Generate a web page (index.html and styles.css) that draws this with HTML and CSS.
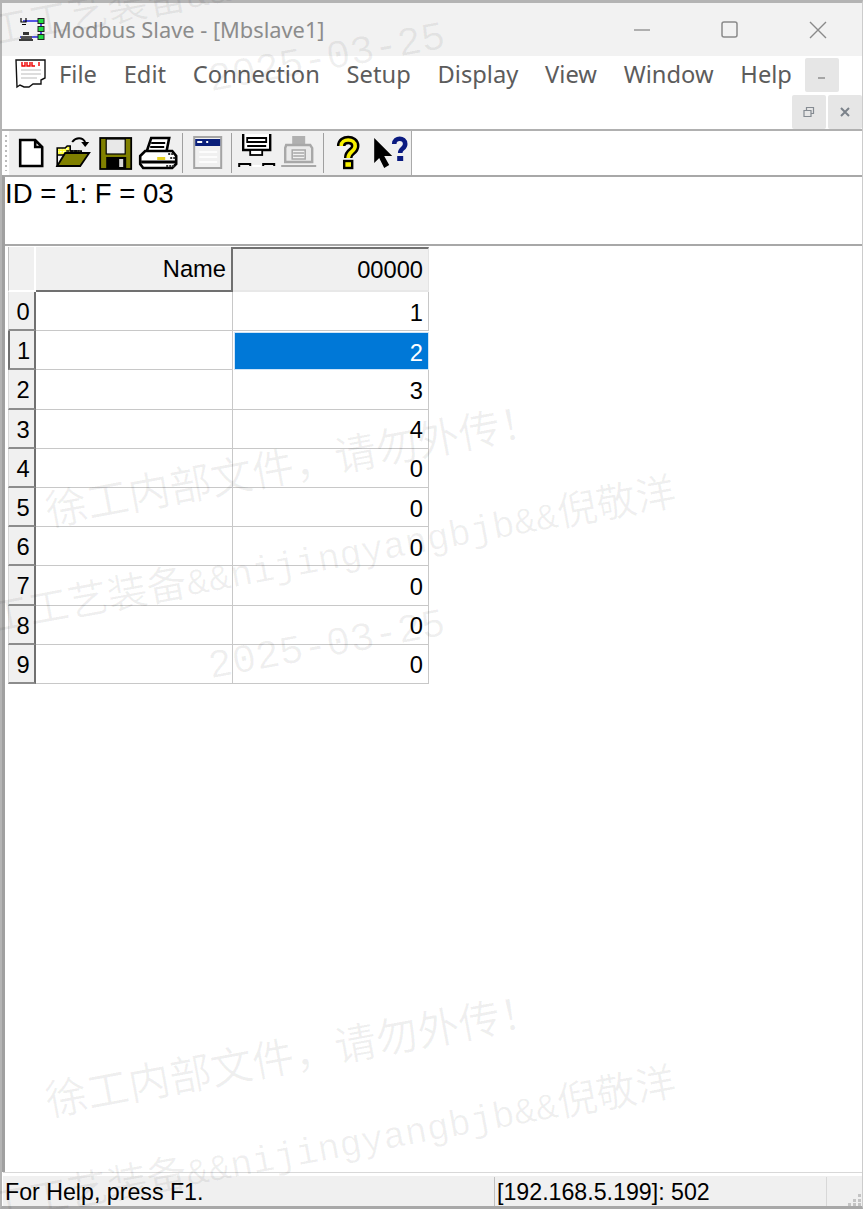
FILE: index.html
```html
<!DOCTYPE html>
<html lang="en">
<head>
  <meta charset="UTF-8">
  <meta name="viewport" content="width=device-width, initial-scale=1.0">
  <title>Modbus Slave - [Mbslave1]</title>
  <link rel="stylesheet" href="styles.css">
</head>
<body>

<div id="app">
  <!-- title bar -->
  <div class="titlebar">
    <svg class="app-icon" width="28" height="26" viewBox="0 0 28 26">
      <path d="M6 4H24M24 4V20M3 20H24" fill="none" stroke="#2222dd" stroke-width="1.5"/>
      <path d="M4 1V5H9V1" fill="none" stroke="#000" stroke-width="1.2"/>
      <rect x="21" y="1.5" width="6" height="5" fill="#22dd44" stroke="#222" stroke-width="1"/>
      <rect x="21" y="9.5" width="6" height="5" fill="#22dd44" stroke="#222" stroke-width="1"/>
      <rect x="21" y="17.5" width="6" height="5" fill="#22dd44" stroke="#222" stroke-width="1"/>
      <rect x="5" y="7" width="4" height="1" fill="#000"/>
      <path d="M6 15H12V18H6Z" fill="#333"/>
      <path d="M4 19H15V22H4Z" fill="#555"/>
      <path d="M2 23H16" stroke="#000" stroke-width="1.5"/>
    </svg>
    <span class="title-text">Modbus Slave - [Mbslave1]</span>
    <div class="win-controls">
      <svg width="88" height="20" viewBox="0 0 18 20"><path d="M1 10H17" stroke="#999" stroke-width="1.5"/></svg>
      <svg width="88" height="20" viewBox="0 0 18 20"><rect x="1" y="2" width="15" height="15" rx="2" fill="none" stroke="#8a8a8a" stroke-width="1.5"/></svg>
      <svg width="88" height="20" viewBox="0 0 18 20"><path d="M1 2L17 18M17 2L1 18" stroke="#8a8a8a" stroke-width="1.4"/></svg>
    </div>
  </div>

  <!-- menu -->
  <div class="menubar">
    <div class="menu-row">
      <svg class="menu-icon" width="31" height="31" viewBox="0 0 31 31">
        <path d="M1 2H30V20L26 22V26H18L14 29H9L5 27L2 29Z" fill="#fff" stroke="#111" stroke-width="1.4"/>
        <path d="M7 4V8H10V4M12 4V8H15V4M17 4V8H20M24 4V8" fill="none" stroke="#e00" stroke-width="1.4"/>
        <path d="M6 12H26M6 16H26M6 20H22" stroke="#bbb" stroke-width="1.2"/>
      </svg>
      <span class="menu-item">File</span>
      <span class="menu-item">Edit</span>
      <span class="menu-item">Connection</span>
      <span class="menu-item">Setup</span>
      <span class="menu-item">Display</span>
      <span class="menu-item">View</span>
      <span class="menu-item">Window</span>
      <span class="menu-item">Help</span>
      <div class="mdi-btn mdi-min"><svg width="10" height="10" viewBox="0 0 10 10"><path d="M1 8H8" stroke="#888" stroke-width="1.4"/></svg></div>
    </div>
    <div class="mdi-row">
      <div class="mdi-btn"><svg width="12" height="12" viewBox="0 0 12 12"><path d="M1 4.5H8V10.5H1ZM3.5 4V1.5H10.5V7.5H8.5" fill="none" stroke="#858b92" stroke-width="1.2"/></svg></div>
      <div class="mdi-btn"><svg width="12" height="12" viewBox="0 0 12 12"><path d="M2 2L10 10M10 2L2 10" stroke="#7b828a" stroke-width="2"/></svg></div>
    </div>
  </div>

  <!-- toolbar -->
  <div class="toolbar">
    <div class="grip"></div>
    <div class="tools">
      <svg class="tool" viewBox="0 0 42 40">
        <path d="M11 7H26L33 14V33H11Z M26 7V14H33" fill="#fff" stroke="#000" stroke-width="2.6"/>
      </svg>
      <svg class="tool" viewBox="0 0 42 40">
        <defs>
          <pattern id="dither" width="3" height="3" patternUnits="userSpaceOnUse">
            <rect width="3" height="3" fill="#ffff30"/>
            <rect width="1.5" height="1.5" fill="#fff"/>
          </pattern>
        </defs>
        <path d="M6 33V15H14L16 13H19V18H30V22H6Z" fill="url(#dither)" stroke="#000" stroke-width="1.6"/>
        <path d="M6 33L14 20H38L29 33Z" fill="#808000" stroke="#000" stroke-width="1.8"/>
        <path d="M15 18H28" stroke="#000" stroke-width="1.5" stroke-dasharray="3 1"/>
        <path d="M21 9C25 4 31 4 34 9" fill="none" stroke="#000" stroke-width="2"/>
        <path d="M30 9H38L34 14Z" fill="#000"/>
      </svg>
      <svg class="tool" viewBox="0 0 42 40">
        <rect x="6" y="5" width="31" height="31" fill="#808000" stroke="#000" stroke-width="1.8"/>
        <rect x="12" y="6" width="19" height="15" fill="#e8e8e8" stroke="#000" stroke-width="1.2"/>
        <rect x="12" y="24" width="20" height="12" fill="#000"/>
        <rect x="25" y="26" width="4" height="8" fill="#d8d8d8"/>
      </svg>
      <svg class="tool" viewBox="0 0 42 40">
        <path d="M10 20L15 5H33L30 20" fill="#fff" stroke="#000" stroke-width="2.6"/>
        <path d="M15 10H29M14 14H28" stroke="#000" stroke-width="1.8"/>
        <path d="M4 23L9 18H36L40 23V31L36 35H7L4 31Z" fill="#fff" stroke="#000" stroke-width="2.6"/>
        <path d="M5 29H39" stroke="#000" stroke-width="3"/>
        <rect x="21" y="24" width="8" height="3" fill="#e6d020"/>
        <path d="M32 21H38M34 25H39M30 33H38" stroke="#333" stroke-width="2" stroke-dasharray="2 1"/>
      </svg>
      <div class="tool-sep"></div>
      <svg class="tool" viewBox="0 0 42 40">
        <rect x="7" y="3" width="29" height="33" fill="#a4a4a4"/>
        <rect x="9" y="5" width="25" height="29" fill="#f0f0f0"/>
        <rect x="9" y="6" width="25" height="7" fill="#0a1f7a"/>
        <rect x="11" y="8" width="5" height="2" fill="#fff"/>
        <rect x="20" y="8" width="2" height="2" fill="#fff"/>
        <path d="M13 19H31M13 24H31M13 29H31" stroke="#fff" stroke-width="1.6"/>
      </svg>
      <div class="tool-sep"></div>
      <svg class="tool" viewBox="0 0 42 40">
        <path d="M8 1V17H35V1" fill="#fff" stroke="#000" stroke-width="2.4"/>
        <path d="M12 5H31V9H12Z" fill="#fff" stroke="#000" stroke-width="1.8"/>
        <path d="M12 13H31" stroke="#000" stroke-width="2"/>
        <rect x="15" y="17" width="12" height="5" fill="#fff" stroke="#000" stroke-width="1.8"/>
        <path d="M4 34V31H15V33M39 33V31H28V33" fill="none" stroke="#000" stroke-width="2"/>
        <path d="M17 33H26" stroke="#fff" stroke-width="2"/>
      </svg>
      <svg class="tool" viewBox="0 0 42 40">
        <rect x="15" y="3" width="13" height="9" fill="#b0b0b0"/>
        <path d="M9 12H33L35 15V29H8V15Z" fill="#eaeaea" stroke="#a8a8a8" stroke-width="2.4"/>
        <path d="M15 17H28V26H15Z" fill="#f2f2f2" stroke="#a8a8a8" stroke-width="1.5"/>
        <path d="M16 20H27M16 23H27" stroke="#a8a8a8" stroke-width="1.4"/>
        <path d="M4 33H39" stroke="#a8a8a8" stroke-width="2"/>
      </svg>
      <div class="tool-sep"></div>
      <svg class="tool" viewBox="0 0 42 40">
        <path d="M14 13C14 5 28 5 28 13C28 19 21 18 21 25" fill="none" stroke="#000" stroke-width="8.5"/>
        <path d="M14 13C14 5 28 5 28 13C28 19 21 18 21 25" fill="none" stroke="#f7f000" stroke-width="3.6"/>
        <rect x="17" y="28" width="8" height="7" fill="#f7f000" stroke="#000" stroke-width="2.4"/>
      </svg>
      <svg class="tool" viewBox="0 0 42 40">
        <path d="M5 5V30L10 25L15 35L20 32L15 23H23Z" fill="#000"/>
        <path d="M25 11C25 4 36 4 36 11C36 16 31 15 31 20" fill="none" stroke="#0a1a80" stroke-width="4.6"/>
        <rect x="28" y="23" width="6" height="5" fill="#0a1a80"/>
      </svg>
    </div>
  </div>

  <!-- client area -->
  <div class="client">
    <div class="info-pane">ID = 1: F = 03</div>
    <div class="grid">
      <div class="cell corner"></div>
      <div class="cell head head-name">Name</div>
      <div class="cell head head-addr">00000</div>

      <div class="cell rowh">0</div><div class="cell"></div><div class="cell val">1</div>
      <div class="cell rowh rowh-active">1</div><div class="cell"></div><div class="cell val selected">2</div>
      <div class="cell rowh">2</div><div class="cell"></div><div class="cell val">3</div>
      <div class="cell rowh">3</div><div class="cell"></div><div class="cell val">4</div>
      <div class="cell rowh">4</div><div class="cell"></div><div class="cell val">0</div>
      <div class="cell rowh">5</div><div class="cell"></div><div class="cell val">0</div>
      <div class="cell rowh">6</div><div class="cell"></div><div class="cell val">0</div>
      <div class="cell rowh">7</div><div class="cell"></div><div class="cell val">0</div>
      <div class="cell rowh">8</div><div class="cell"></div><div class="cell val">0</div>
      <div class="cell rowh">9</div><div class="cell"></div><div class="cell val">0</div>
    </div>
  </div>

  <!-- status bar -->
  <div class="statusbar">
    <div class="pane pane-msg">For Help, press F1.</div>
    <div class="pane pane-addr">[192.168.5.199]: 502</div>
    <div class="pane pane-grip">
      <svg width="14" height="14" viewBox="0 0 14 14"><path d="M10 2h3v3h-3zM5 7h3v3h-3zM10 7h3v3h-3zM0 11h3v3h-3zM5 11h3v3h-3zM10 11h3v3h-3z" fill="#c4c4c4"/></svg>
    </div>
  </div>
</div>

<!-- watermark, repeats down the page -->
<div class="wm-layer">
  <div class="wm wm-top">
    <span class="wm-line wm-two">徐工工艺装备<i>&amp;&amp;nijingyangbjb&amp;&amp;</i>倪敬洋</span>
    <span class="wm-line wm-three">2025-03-25</span>
  </div>
  <div class="wm wm-mid">
    <span class="wm-line wm-one">徐工内部文件，请勿外传！</span>
    <span class="wm-line wm-two">徐工工艺装备<i>&amp;&amp;nijingyangbjb&amp;&amp;</i>倪敬洋</span>
    <span class="wm-line wm-three">2025-03-25</span>
  </div>
  <div class="wm wm-low">
    <span class="wm-line wm-one">徐工内部文件，请勿外传！</span>
    <span class="wm-line wm-two">徐工工艺装备<i>&amp;&amp;nijingyangbjb&amp;&amp;</i>倪敬洋</span>
  </div>
</div>

</body>
</html>
```

FILE: styles.css
```css
html, body {
  margin: 0;
  padding: 0;
  height: 100%;
  overflow: hidden;
  background-color: #fff;
}

body {
  position: relative;
  font-family: 'Liberation Sans', Arial, sans-serif;
}

#app {
  box-sizing: border-box;
  display: flex;
  flex-direction: column;
  height: 1209px;
  border-top: 3px solid #b4b4b4;
  border-bottom: 3px solid #a8a8a8;
  border-left: 2px solid #b4b4b4;
  border-right: 1px solid #ccc;
  margin-right: 2px;
}

/* title bar */
.titlebar {
  display: flex;
  align-items: center;
  height: 53px;
  flex: none;
  background-color: #f2f2f2;
  padding-left: 15px;
}

.app-icon {
  flex: none;
}

.title-text {
  margin-left: 7px;
  font-family: 'Noto Sans', sans-serif;
  font-size: 21.8px;
  color: #8c8c8c;
  white-space: nowrap;
}

.win-controls {
  display: flex;
  margin-left: auto;
  padding-right: 0;
}

.win-controls svg {
  display: block;
}

/* menu */
.menubar {
  height: 75px;
  flex: none;
  box-sizing: border-box;
  border-bottom: 2px solid #b0b0b0;
  display: flex;
  flex-direction: column;
}

.menu-row {
  display: flex;
  align-items: flex-start;
  height: 39px;
  padding-left: 13px;
}

.menu-icon {
  flex: none;
  margin-top: 2px;
}

.menu-item {
  padding: 0 13.4px;
  font-family: 'Noto Sans', sans-serif;
  font-size: 23.7px;
  line-height: 36px;
  color: #5c5c5c;
}

.menu-icon + .menu-item {
  padding-left: 13px;
}

.mdi-btn {
  width: 34px;
  height: 34px;
  display: flex;
  align-items: center;
  justify-content: center;
  background-color: #e6e6e6;
  border-radius: 2px;
}

.mdi-min {
  margin: 2px 0 0 0;
}

.mdi-row {
  display: flex;
  justify-content: flex-end;
  gap: 2px;
}

/* toolbar */
.toolbar {
  display: flex;
  height: 44px;
  flex: none;
  background-color: #fff;
}

.grip {
  width: 2px;
  margin: 4px 0 0 3px;
  height: 36px;
  background-image: linear-gradient(#bbb 50%, transparent 50%);
  background-size: 2px 5px;
}

.tools {
  display: flex;
  align-items: center;
  margin-left: 2px;
  width: 402px;
  background-color: #f0f0f0;
  border-right: 1px solid #aaa;
}

.tool {
  display: block;
  flex: none;
  width: 42.4px;
  height: 40px;
}

.tool-sep {
  flex: none;
  width: 1px;
  height: 40px;
  margin: 0 3px;
  background-color: #a0a0a0;
}

/* client area */
.client {
  flex: 1;
  min-height: 0;
  border-top: 2px solid #a8a8a8;
  border-left: 3px solid #a0a0a0;
  background-color: #fff;
}

.info-pane {
  box-sizing: border-box;
  height: 69px;
  padding-left: 0;
  border-bottom: 2px solid #a8a8a8;
  font-size: 27.6px;
  line-height: 33px;
  color: #000;
}

.grid {
  display: grid;
  grid-template-columns: 28px 197px 196px;
  grid-template-rows: 45px repeat(10, 39.2px);
  width: 421px;
  margin-left: 3px;
  margin-top: 1px;
  font-size: 23.7px;
  color: #000;
}

.cell {
  box-sizing: border-box;
  border-right: 1px solid #c8c8c8;
  border-bottom: 1px solid #c8c8c8;
  padding: 4px 5px 0;
  display: flex;
  align-items: center;
  justify-content: flex-end;
  background-color: #fff;
}

.corner, .head, .rowh {
  background-color: #f0f0f0;
}

.corner {
  border-left: 1px solid #c0c0c0;
  border-right: 2px solid #fff;
  border-bottom: 2px solid #fff;
}

.head {
  padding-top: 2px;
}

.head-name {
  border-right: 2px solid #707070;
  border-bottom: 2px solid #707070;
}

.head-addr {
  border-top: 2px solid #707070;
  border-right: 1px solid #e4e4e4;
  border-bottom: 2px solid #e8e8e8;
}

.rowh {
  justify-content: center;
  padding: 4px 0 0 3px;
  border-left: 1px solid #d8d8d8;
  border-right: 2px solid #707070;
  border-bottom: 2px solid #8c8c8c;
}

.rowh-active {
  border-left: 2px solid #707070;
}

.selected {
  background-color: #0078d7;
  color: #fff;
  border: 1px solid #cfe4f7;
  margin: 1px 0 0 1px;
}

/* status bar */
.statusbar {
  display: flex;
  height: 34px;
  flex: none;
  box-sizing: border-box;
  margin-left: 1px;
  border-top: 1px solid #d8d8d8;
  padding-top: 4px;
  background: linear-gradient(#fff 3px, #f0f0f0 3px);
  font-size: 23.2px;
  color: #000;
}

.pane {
  box-sizing: border-box;
  line-height: 30px;
  white-space: nowrap;
  padding-left: 2px;
}

.pane-msg {
  width: 492px;
  border-right: 1px solid #c0c0c0;
}

.pane-addr {
  width: 332px;
  border-right: 1px solid #d8d8d8;
}

.pane-grip {
  flex: 1;
  display: flex;
  justify-content: flex-end;
  align-items: flex-end;
  padding: 0;
}

/* watermark */
.wm-layer {
  position: absolute;
  top: 0;
  left: 0;
  width: 865px;
  height: 1209px;
  overflow: hidden;
  pointer-events: none;
}

.wm {
  position: absolute;
  left: 0;
  width: 865px;
  height: 200px;
  color: rgba(0, 0, 0, 0.06);
  font-family: 'Liberation Serif', 'Noto Sans CJK SC', serif;
}

.wm-top { top: -187px; }
.wm-mid { top: 400px; }
.wm-low { top: 990px; }

.wm-line {
  position: absolute;
  white-space: nowrap;
  transform: rotate(-10.5deg);
  transform-origin: left bottom;
  font-size: 40px;
  line-height: 44px;
}

.wm-line i {
  font-family: 'Liberation Mono', monospace;
  font-style: normal;
  font-size: 37px;
}

.wm-one {
  left: 50px;
  top: 90px;
  font-size: 42px;
}

.wm-two {
  left: -45px;
  top: 204px;
}

.wm-three {
  left: 213px;
  top: 246px;
  font-family: 'Liberation Mono', monospace;
}
```
